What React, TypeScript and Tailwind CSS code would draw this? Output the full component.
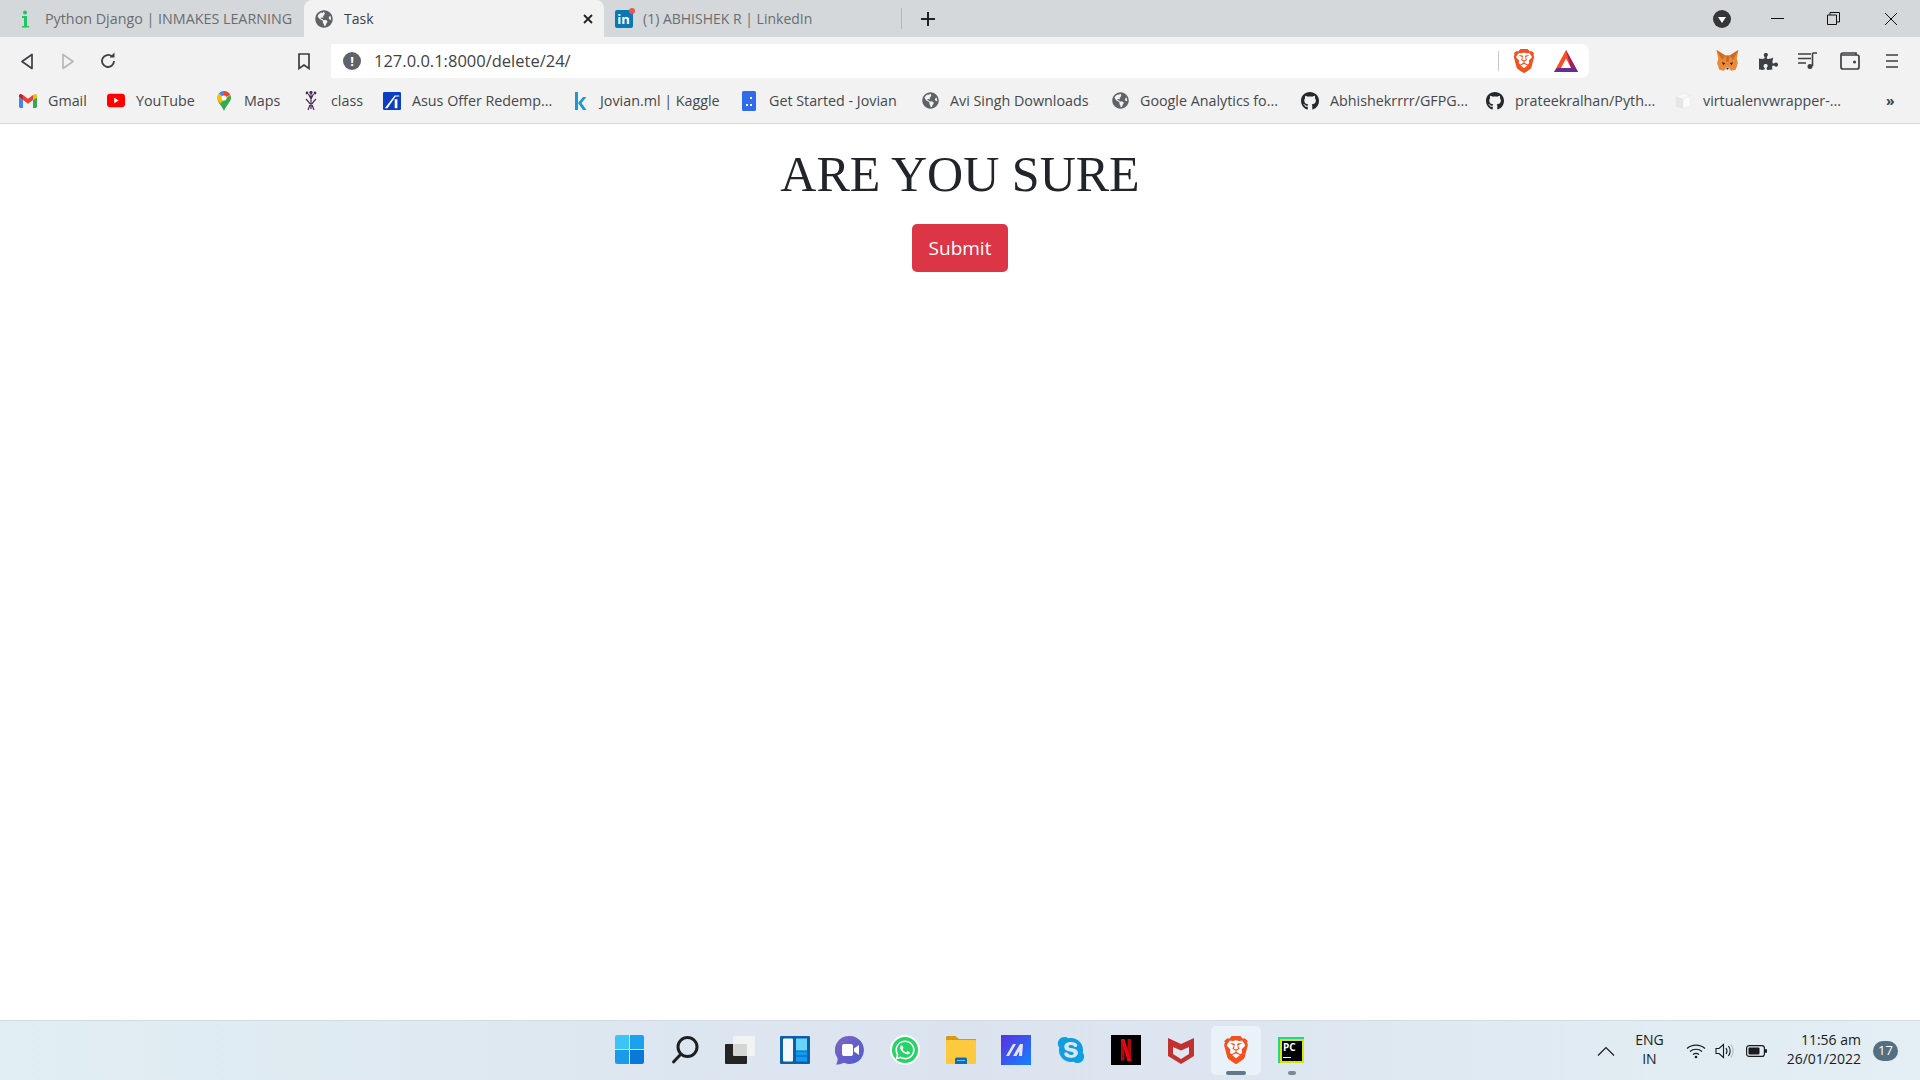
import React from 'react';
import { FaGithub, FaGlobeAmericas, FaPuzzlePiece, FaWhatsapp, FaSkype } from 'react-icons/fa';
import { SiBrave } from 'react-icons/si';

const ui = { fontFamily: '"Open Sans", "Noto Sans", sans-serif' };

const Globe = ({ size = 18 }: { size?: number }) => <FaGlobeAmericas size={size} color="#5f6368" />;

const Brave = ({ size = 22 }: { size?: number }) => (
  <span className="relative flex items-center justify-center">
    <span className="absolute inset-[18%] rounded-full bg-white" />
    <SiBrave size={size} color="#f4511e" className="relative" />
  </span>
);

const Gmail = () => (
  <svg width="18" height="14" viewBox="0 0 18 14">
    <path d="M0 3v9.5C0 13.3.7 14 1.5 14H4V6z" fill="#4285f4" />
    <path d="M18 3v9.5c0 .8-.7 1.5-1.5 1.5H14V6z" fill="#34a853" />
    <path d="M14 1v5l4-3V1.8C18 .3 16.4-.4 15.3.4z" fill="#fbbc04" />
    <path d="M4 6V1l5 3.8L14 1v5L9 9.7z" fill="#ea4335" />
    <path d="M0 1.8V3l4 3V1L2.7.4C1.6-.4 0 .3 0 1.8z" fill="#c5221f" />
  </svg>
);

const YouTube = () => (
  <svg width="20" height="15" viewBox="0 0 20 15">
    <rect width="20" height="15" rx="3.5" fill="#f00" />
    <path d="M8 4.500v6l5-3z" fill="#fff" />
  </svg>
);

const Maps = () => (
  <svg width="14" height="20" viewBox="0 0 14 20">
    <path d="M7 0a7 7 0 0 0-5.300 2.400L7 7z" fill="#4285f4" />
    <path d="M7 0a7 7 0 0 1 6.300 4L7 7z" fill="#ea4335" />
    <path d="M1.700 2.400A7 7 0 0 0 0 7c0 1.300.4 2.400 1 3.500L7 7z" fill="#fbbc04" />
    <path d="M13.300 4A7 7 0 0 1 14 7c0 3.500-4.500 7-7 13-1.200-3.500-4.300-6.700-6-9.500z" fill="#34a853" />
    <path d="M13.300 4 3.500 12.500 1 10.500 7 7z" fill="#fbbc04" opacity=".9" />
    <circle cx="7" cy="7" r="2.500" fill="#fff" />
  </svg>
);

const ClassIcon = () => (
  <svg width="12" height="20" viewBox="0 0 12 20" fill="none" stroke="#4a2a52" strokeWidth="1.200">
    <path d="M6 3v15M3.500 3 6 8l2.500-5M1 8c2 2 3 3 4 5M11 8c-2 2-3 3-4 5M3 19l2-5M9 19l-2-5" />
    <circle cx="6" cy="1.500" r="1" fill="#4a2a52" />
    <circle cx="2" cy="2" r=".8" fill="#4a2a52" />
    <circle cx="10" cy="2" r=".8" fill="#4a2a52" />
  </svg>
);

const Asus = () => (
  <svg width="20" height="20" viewBox="0 0 20 20">
    <rect width="20" height="20" rx="1.500" fill="#0a3fc4" />
    <path d="M2 18 13 4h5v1h-4L5 18z" fill="#fff" />
    <path d="M13 8h3v10h-3z" fill="#fff" />
  </svg>
);

const Jovian = () => (
  <svg width="14" height="20" viewBox="0 0 14 20">
    <rect x="2" y="1" width="3" height="18" fill="#1c9ac9" />
    <path d="M5 12 10 6h3.500L8.500 12l5 7H10z" fill="#1c9ac9" />
  </svg>
);

const GetStarted = () => (
  <svg width="14" height="20" viewBox="0 0 14 20">
    <rect width="14" height="20" rx="1.500" fill="#2f6bea" />
    <rect x="8" y="6" width="2" height="2" fill="#fff" />
    <rect x="8" y="13" width="2" height="2" fill="#fff" />
    <rect x="4" y="13" width="2" height="2" fill="#fff" />
  </svg>
);

const Cube = () => (
  <svg width="20" height="20" viewBox="0 0 20 20">
    <path d="M2 5 11 1l7 3-8 4z" fill="#f8f8f8" stroke="#e6e6e6" strokeWidth=".6" />
    <path d="M2 5l8 3v11l-8-3z" fill="#e6e6e6" />
    <path d="M10 8l8-4v11l-8 4z" fill="#fbfbfb" stroke="#e6e6e6" strokeWidth=".6" />
  </svg>
);

const Fox = () => (
  <svg width="25" height="24" viewBox="0 0 22 22">
    <path d="M1 1l8 5h4l8-5-1.500 8 1 4-2 6-4 1-2-1.500H9.500L7.500 20l-4-1-2-6 1-4z" fill="#e88a3a" />
    <path d="M9 6h4l-1 6h-2zM1 1l8 5-3 4zM21 1l-8 5 3 4z" fill="#d06a20" />
    <path d="M6 12l3 1-2 2zM16 12l-3 1 2 2z" fill="#33261d" />
    <path d="M7.500 20l2-3h3l2 3-2-1.500h-3z" fill="#d8c9bb" />
    <path d="M9.800 17.500h2.400L11 19z" fill="#2a211b" />
  </svg>
);

const Bat = () => (
  <svg width="24" height="23" viewBox="0 0 24 23">
    <path d="M12 0 24 22H0z" fill="#ff4b24" />
    <path d="M12 0 24 22H12l5-3z" fill="#9e1f63" />
    <path d="M0 22h24l-3-4H3z" fill="#662d91" />
    <path d="M12 8.500 17 18H7z" fill="#fff" />
  </svg>
);

const Netflix = () => (
  <svg width="30" height="30" viewBox="0 0 30 30">
    <rect width="30" height="30" fill="#000" />
    <path d="M10 4h3.500v21L10 26zM16.500 4H20v22h-3.500z" fill="#b20710" />
    <path d="M10 4h3.500l6.500 22h-3.500z" fill="#e50914" />
  </svg>
);

const McAfee = () => (
  <svg width="28" height="30" viewBox="0 0 28 30">
    <path d="M1 3 14 9l13-6v18l-13 8-13-8z" fill="#c1312f" />
    <path d="M6 12l8 3.500L22 12v7l-8 5-8-5z" fill="#dfe8f0" />
  </svg>
);

const Zoho = () => (
  <svg width="30" height="30" viewBox="0 0 30 30">
    <defs>
      <linearGradient id="zh" x1="0" y1="0" x2="1" y2="1">
        <stop offset="0" stopColor="#5a2fe0" />
        <stop offset="1" stopColor="#1583ff" />
      </linearGradient>
    </defs>
    <rect width="30" height="30" fill="url(#zh)" />
    <path d="M5 21 12 9h3L8 21zM12 21l7-12h3l-1 12h-3l.3-5-2.800 5z" fill="#e8e4ff" />
  </svg>
);

const PyCharm = () => (
  <div className="flex h-[26px] w-[26px] flex-col border-l-2 border-t-2 border-l-[#21d789] border-t-[#21d789] bg-black px-[3px] pt-[3px] text-[10px] font-bold leading-[11px] text-white ring-2 ring-inset ring-[#d8e21a]">
    <span>PC</span>
    <span className="mt-[4px] h-[1px] w-[8px] bg-white" />
  </div>
);

const Widgets = () => (
  <svg width="30" height="28" viewBox="0 0 30 28">
    <rect width="30" height="28" rx="1" fill="#0f5ea8" />
    <rect x="3" y="2.500" width="10" height="23" rx="1" fill="#f4f7fa" />
    <rect x="16" y="2.500" width="11" height="12" fill="#65d5fb" />
    <rect x="16" y="15.500" width="11" height="4" fill="#119bf0" />
    <rect x="16" y="20.500" width="11" height="5" fill="#119bf0" />
  </svg>
);

const Chat = () => (
  <svg width="30" height="30" viewBox="0 0 30 30">
    <defs>
      <linearGradient id="ch" x1="0" y1="0" x2="1" y2="1">
        <stop offset="0" stopColor="#8264bd" />
        <stop offset="1" stopColor="#4d5bd6" />
      </linearGradient>
    </defs>
    <path d="M15 1a14 14 0 1 1-6 26.700C6.500 29 3 29.500 1 29.500c1.300-2 1.700-4 1.500-6.500A14 14 0 0 1 15 1z" fill="url(#ch)" />
    <rect x="7" y="9" width="11" height="12" rx="2" fill="#fff" />
    <path d="M19 13.500 24 10v10l-5-3.500z" fill="#fff" />
  </svg>
);

const Explorer = () => (
  <svg width="30" height="28" viewBox="0 0 30 28">
    <path d="M0 1.500C0 .7.700 0 1.500 0h8L13 3h17v6H0z" fill="#d99a0b" />
    <rect y="4" width="30" height="24" rx="1" fill="#fcc93f" />
    <path d="M9 23a1.500 1.500 0 0 1 1.500-1.500h9A1.500 1.500 0 0 1 21 23v5H9z" fill="#0f6cbd" />
    <rect x="11" y="24" width="8" height="1" fill="#66c0f4" />
  </svg>
);

const bookmarks: { label: string; width: string; icon: React.ReactNode }[] = [
  { label: 'Gmail', width: 'w-[88px]', icon: <Gmail /> },
  { label: 'YouTube', width: 'w-[108px]', icon: <YouTube /> },
  { label: 'Maps', width: 'w-[87px]', icon: <Maps /> },
  { label: 'class', width: 'w-[81px]', icon: <ClassIcon /> },
  { label: 'Asus Offer Redemp...', width: 'w-[188px]', icon: <Asus /> },
  { label: 'Jovian.ml | Kaggle', width: 'w-[169px]', icon: <Jovian /> },
  { label: 'Get Started - Jovian', width: 'w-[181px]', icon: <GetStarted /> },
  { label: 'Avi Singh Downloads', width: 'w-[190px]', icon: <Globe size={17} /> },
  { label: 'Google Analytics fo...', width: 'w-[190px]', icon: <Globe size={17} /> },
  { label: 'Abhishekrrrr/GFPG...', width: 'w-[185px]', icon: <FaGithub size={20} color="#24292e" /> },
  { label: 'prateekralhan/Pyth...', width: 'w-[188px]', icon: <FaGithub size={20} color="#24292e" /> },
  { label: 'virtualenvwrapper-...', width: 'w-[212px]', icon: <Cube /> },
];

const taskbarIcons: { key: string; icon: React.ReactNode; active?: boolean; running?: boolean }[] = [
  {
    key: 'start',
    icon: (
      <div className="grid h-[29px] w-[29px] grid-cols-2 gap-[1px]">
        <span className="rounded-tl-[2px] bg-[#3cc4f7]" />
        <span className="rounded-tr-[2px] bg-[#1ba1ee]" />
        <span className="rounded-bl-[2px] bg-[#1a9ae8]" />
        <span className="rounded-br-[2px] bg-[#0a78d8]" />
      </div>
    ),
  },
  {
    key: 'search',
    icon: (
      <svg width="28" height="30" viewBox="0 0 28 30" fill="none" stroke="#1f1f1f" strokeWidth="3" strokeLinecap="round">
        <circle cx="16.500" cy="12" r="9.500" />
        <path d="M9.500 19.500 2.500 27" />
      </svg>
    ),
  },
  {
    key: 'taskview',
    icon: (
      <svg width="30" height="28" viewBox="0 0 30 28">
        <rect y="8" width="22" height="20" rx="1" fill="#242424" />
        <rect x="8" y="0" width="22" height="20" rx="1" fill="#f5f5f5" opacity=".85" />
      </svg>
    ),
  },
  { key: 'widgets', icon: <Widgets /> },
  { key: 'chat', icon: <Chat /> },
  {
    key: 'whatsapp',
    icon: (
      <span className="flex h-[26px] w-[26px] items-center justify-center rounded-full bg-[#25d366] ring-2 ring-white">
        <FaWhatsapp size={22} color="#fff" />
      </span>
    ),
  },
  { key: 'explorer', icon: <Explorer /> },
  { key: 'zoho', icon: <Zoho /> },
  { key: 'skype', icon: <FaSkype size={30} color="#0f9fe0" /> },
  { key: 'netflix', icon: <Netflix /> },
  { key: 'mcafee', icon: <McAfee /> },
  { key: 'brave', icon: <Brave size={28} />, active: true },
  { key: 'pycharm', icon: <PyCharm />, running: true },
];

const Tab = ({ title, favicon, active, width, iconCell = 'w-[40px]', textSize = 'text-[14px]' }: { title: string; favicon: React.ReactNode; active?: boolean; width: string; iconCell?: string; textSize?: string }) => (
  <div className={`flex h-full shrink-0 items-center overflow-hidden whitespace-nowrap ${textSize} ${width} ${active ? 'rounded-t-lg bg-[#f2f2f2] text-[#3c3f43]' : 'text-[#6a6d70]'}`}>
    <span className={`flex shrink-0 justify-center ${iconCell}`}>{favicon}</span>
    <span className="min-w-0 flex-1 overflow-hidden">{title}</span>
    {active && (
      <svg width="12" height="12" viewBox="0 0 12 12" className="mr-[10px] shrink-0" stroke="#202124" strokeWidth="1.800">
        <path d="M2 2l8 8M10 2l-8 8" />
      </svg>
    )}
  </div>
);

export default function App() {
  return (
    <div className="flex h-screen flex-col overflow-hidden bg-white" style={ui}>
      <div className="flex h-[37px] shrink-0 items-stretch bg-[#d5d8db]">
        <Tab
          title="Python Django | INMAKES LEARNING"
          width="w-[304px]"
          iconCell="w-[45px]"
          textSize="text-[14.3px]"
          favicon={
            <svg width="10" height="18" viewBox="0 0 10 18" className="ml-[5px]">
              <circle cx="5" cy="2.500" r="2" fill="#22c55e" />
              <path d="M2 6h5v10h2v1.500H2V16h2V8H2z" fill="#22c55e" />
            </svg>
          }
        />
        <Tab title="Task" active width="w-[300px]" favicon={<Globe />} />
        <Tab
          title="(1) ABHISHEK R | LinkedIn"
          width="w-[297px]"
          iconCell="w-[39px]"
          favicon={
            <span className="relative flex h-[18px] w-[18px] items-center justify-center rounded-[2px] bg-[#0a78b5] pt-[1px] text-[13px] font-bold leading-none text-white">
              in
              <span className="absolute right-[-2px] top-[-2px] h-[6px] w-[6px] rounded-full bg-[#ef5350]" />
            </span>
          }
        />
        <div className="my-[8px] w-px bg-[#b4b7ba]" />
        <div className="flex w-[52px] items-center justify-center">
          <svg width="16" height="16" viewBox="0 0 16 16" stroke="#202124" strokeWidth="2">
            <path d="M8 1v14M1 8h14" />
          </svg>
        </div>
        <div className="flex-1" />
        <div className="flex w-[50px] items-center justify-center pr-[6px]">
          <span className="flex h-[18px] w-[18px] items-center justify-center rounded-full bg-[#35363a]">
            <span className="mt-[2px] h-0 w-0 border-x-[4px] border-t-[6px] border-x-transparent border-t-white" />
          </span>
        </div>
        <div className="flex w-[54px] items-center justify-center">
          <span className="h-px w-[13px] bg-[#111]" />
        </div>
        <div className="flex w-[58px] items-center justify-center">
          <svg width="13" height="13" viewBox="0 0 13 13" fill="none" stroke="#111">
            <path d="M.5 3h9v9.500h-9zM3 3V.5h9.500V10H9.500" />
          </svg>
        </div>
        <div className="flex w-[58px] items-center justify-center">
          <svg width="14" height="14" viewBox="0 0 14 14" stroke="#111">
            <path d="M1 1l12 12M13 1 1 13" />
          </svg>
        </div>
      </div>

      <div className="flex h-[41px] shrink-0 items-stretch bg-[#f2f2f2] pl-[7px] pr-[8px] pt-[7px]">
        <div className="flex w-[40px] items-center justify-center">
          <svg width="14" height="17" viewBox="0 0 14 17" fill="none" stroke="#3c3f43" strokeWidth="1.700" strokeLinejoin="round">
            <path d="M12 1.500v14L2 8.500z" />
          </svg>
        </div>
        <div className="flex w-[41px] items-center justify-center">
          <svg width="14" height="17" viewBox="0 0 14 17" fill="none" stroke="#b6b8ba" strokeWidth="1.700" strokeLinejoin="round">
            <path d="M2 1.500v14l10-7z" />
          </svg>
        </div>
        <div className="flex w-[40px] items-center justify-center">
          <svg width="18" height="18" viewBox="0 0 18 18" fill="none" stroke="#3c3f43" strokeWidth="1.800">
            <path d="M15 9a6 6 0 1 1-2-4.500" />
            <path d="M10.500 5.500h5v-5z" fill="#3c3f43" stroke="none" />
          </svg>
        </div>
        <div className="flex w-[203px] items-center justify-end pr-[21px]">
          <svg width="12" height="17" viewBox="0 0 12 17" fill="none" stroke="#3c3f43" strokeWidth="1.700">
            <path d="M1 1h10v14.500l-5-3.500-5 3.500z" />
          </svg>
        </div>
        <div className="flex w-[1258px] items-center rounded-l-[2px] rounded-r-lg bg-white">
          <span className="ml-[12px] flex h-[18px] w-[18px] items-center justify-center rounded-full bg-[#5f6368] text-[13px] font-bold leading-none text-white">!</span>
          <span className="ml-[13px] flex-1 text-[16.5px] text-[#3f4246]">127.0.0.1:8000/delete/24/</span>
          <span className="h-[20px] w-px bg-[#c8cacc]" />
          <span className="ml-[14px] flex w-[22px] justify-center"><Brave size={24} /></span>
          <span className="ml-[19px] mr-[11px] flex"><Bat /></span>
        </div>
        <div className="flex w-[159px] items-center justify-start pl-[126px]"><Fox /></div>
        <div className="flex w-[40px] items-center justify-center"><FaPuzzlePiece size={19} color="#3c3f43" /></div>
        <div className="flex w-[40px] items-center justify-center">
          <svg width="20" height="18" viewBox="0 0 20 18" fill="none" stroke="#3c3f43" strokeWidth="1.600">
            <path d="M0 2h13M0 6.500h13M0 11h8M14.500 1v13M14.500 1H19" />
            <circle cx="12" cy="14.500" r="2.500" fill="#3c3f43" stroke="none" />
          </svg>
        </div>
        <div className="flex w-[43px] items-center justify-center">
          <svg width="20" height="18" viewBox="0 0 20 18" fill="none" stroke="#3c3f43" strokeWidth="1.700">
            <path d="M16 3V1H3C2 1 1 2 1 3v12c0 1 1 2 2 2h14c1 0 2-1 2-2V5c0-1-1-2-2-2H2" />
            <circle cx="14.500" cy="10" r="1.500" fill="#3c3f43" stroke="none" />
          </svg>
        </div>
        <div className="flex flex-1 items-center justify-center">
          <svg width="14" height="16" viewBox="0 0 14 16" stroke="#3c3f43" strokeWidth="1.700">
            <path d="M1 2h12M1 8h12M1 14h12" />
          </svg>
        </div>
      </div>

      <div className="box-border flex h-[46px] shrink-0 items-center border-b border-[#d8d9da] bg-[#f2f2f2] pl-[19px] text-[14.3px] text-[#45484c]">
        {bookmarks.map((b) => (
          <div key={b.label} className={`flex shrink-0 items-center gap-[11px] whitespace-nowrap ${b.width}`}>
            <span className="flex w-[18px] shrink-0 justify-center">{b.icon}</span>
            <span>{b.label}</span>
          </div>
        ))}
        <span className="text-[14px] font-bold text-[#3c3f43]">»</span>
      </div>

      <main className="flex min-h-0 flex-1 flex-col items-center bg-white">
        <h1 className="mt-[20px] text-[50px] leading-[60px] text-[#212529]" style={{ fontFamily: '"Liberation Serif", serif' }}>ARE YOU SURE</h1>
        <button className="mt-[20px] h-[48px] w-[96px] rounded-[5px] bg-[#dc3545] pt-[1px] text-[19px] text-white">Submit</button>
      </main>

      <div className="grid h-[60px] shrink-0 grid-cols-[1fr_auto_1fr] border-t border-[#d3dde6] bg-gradient-to-r from-[#e1eef3] via-[#dbe3ef] to-[#e3eff4]">
        <div />
        <div className="ml-[1px] flex">
          {taskbarIcons.map((t) => (
            <div key={t.key} className="relative flex w-[55.1px] items-center justify-center pb-[2px]">
              {t.active && <span className="absolute inset-x-[3px] bottom-[5px] top-[5px] rounded-[5px] bg-[#eaf2f9]" />}
              <span className="relative flex">{t.icon}</span>
              {t.active && <span className="absolute bottom-[5px] left-[18px] h-[4px] w-[20px] rounded-full bg-[#60788a]" />}
              {t.running && <span className="absolute bottom-[5px] left-[24px] h-[4px] w-[8px] rounded-full bg-[#7b8a96]" />}
            </div>
          ))}
        </div>
        <div className="flex items-center justify-end text-[14px] text-[#1b1b1b]">
          <svg width="18" height="10" viewBox="0 0 18 10" fill="none" stroke="#1b1b1b" strokeWidth="1.200" className="mr-[20px]">
            <path d="M1 9.500 9 1.500l8 8" />
          </svg>
          <div className="mr-[22px] flex flex-col items-center pb-[3px] leading-[19px]">
            <span>ENG</span>
            <span>IN</span>
          </div>
          <svg width="20" height="16" viewBox="0 0 20 16" fill="none" stroke="#1b1b1b" strokeWidth="1.200" className="mr-[9px]">
            <path d="M1 5.500C6 1 14 1 19 5.500M4 8.500c3.500-3 8.500-3 12 0M7 11.500c2-1.500 4-1.500 6 0" />
            <circle cx="10" cy="14" r="1.300" fill="#1b1b1b" stroke="none" />
          </svg>
          <svg width="20" height="16" viewBox="0 0 20 16" fill="none" stroke="#1b1b1b" strokeWidth="1.100" className="mr-[11px]">
            <path d="M1 5.500h3L8.500 1.500v13L4 10.500H1zM11 5c1.200 1.800 1.200 4.200 0 6M13.500 3c2 3 2 7 0 10" />
            <path d="M16 1.500c2.600 4 2.600 9 0 13" stroke="#b6bcc2" />
          </svg>
          <svg width="21" height="12" viewBox="0 0 21 12" className="mr-[20px]">
            <rect x=".6" y=".6" width="17.800" height="10.800" rx="2.500" fill="none" stroke="#1b1b1b" strokeWidth="1.200" />
            <rect x="2.500" y="2.500" width="11" height="7" rx="1" fill="#1b1b1b" />
            <rect x="19" y="4" width="2" height="4" rx="1" fill="#1b1b1b" />
          </svg>
          <div className="flex flex-col items-end pb-[3px] leading-[19px]">
            <span>11:56 am</span>
            <span>26/01/2022</span>
          </div>
          <span className="ml-[12px] mr-[22px] flex h-[20px] w-[25px] items-center justify-center rounded-full bg-[#546f82] text-[13px] text-white">17</span>
        </div>
      </div>
    </div>
  );
}
